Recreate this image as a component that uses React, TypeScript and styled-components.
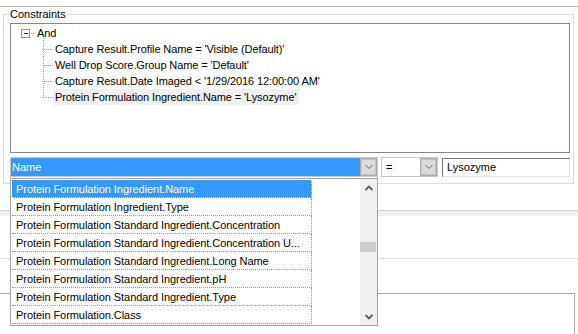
import React from 'react';
import styled, { createGlobalStyle, css } from 'styled-components';

const GlobalStyle = createGlobalStyle`
  html, body {
    margin: 0;
    padding: 0;
    background: #fff;
  }
  body {
    font-family: 'Liberation Sans', Arial, sans-serif;
    font-size: 11px;
    color: #000;
  }
`;

const Page = styled.div`
  position: relative;
  width: 578px;
  height: 334px;
  overflow: hidden;
  background: #fff;
  display: flex;
  flex-direction: column;
`;

const Rule = styled.div<{ $top: number; $color?: string }>`
  flex: none;
  height: 1px;
  margin-top: ${({ $top }) => $top}px;
  background: ${({ $color }) => $color ?? '#dcdcdc'};
`;

const Band = styled.div`
  flex: none;
  height: 5px;
  background: #f0f0f0;
`;

const LowerPanel = styled.div`
  flex: 1;
  width: 575px;
  margin-top: 34px;
  box-sizing: border-box;
  border-top: 1px solid #a8a8a8;
  border-right: 1px solid #a8a8a8;
`;

const GroupBox = styled.div`
  position: relative;
  flex: none;
  width: 571px;
  height: 170px;
  margin: 7px 0 0 3px;
  box-sizing: border-box;
  border: 1px solid #dcdcdc;
  padding: 8px 0 0 6px;
  display: flex;
  flex-direction: column;
  gap: 4px;
`;

const Legend = styled.span`
  position: absolute;
  top: -7px;
  left: 5px;
  padding: 0 1px;
  background: #fff;
  line-height: 13px;
`;

const TreeBox = styled.div`
  width: 560px;
  height: 130px;
  box-sizing: border-box;
  border: 1px solid #828790;
  padding: 1px 0 0 6px;
  letter-spacing: -0.1px;
`;

const TreeRow = styled.div<{ $depth: number }>`
  display: flex;
  align-items: center;
  height: 16px;
  padding-left: ${({ $depth }) => $depth * 18}px;
`;

const Glyph = styled.svg`
  flex: none;
  display: block;
  width: 18px;
  height: 16px;
  overflow: visible;
`;

const NodeLabel = styled.span<{ $selected?: boolean }>`
  height: 16px;
  line-height: 16px;
  padding: 0 3px 0 2px;
  white-space: nowrap;
  background: ${({ $selected }) => ($selected ? '#f0f0f0' : 'transparent')};
`;

const EditorRow = styled.div`
  display: flex;
  align-items: flex-start;
  width: 560px;
`;

const Combo = styled.div<{ $width: number; $gap?: number }>`
  flex: none;
  display: flex;
  width: ${({ $width }) => $width}px;
  height: 20px;
  margin-left: ${({ $gap }) => $gap ?? 0}px;
  box-sizing: border-box;
  border: 1px solid #c8c8c8;
  background: #fff;
`;

const ComboField = styled.div<{ $active?: boolean; $pad: number }>`
  flex: 1;
  display: flex;
  align-items: center;
  padding-left: ${({ $pad }) => $pad}px;
  background: ${({ $active }) => ($active ? '#3399ff' : '#fff')};
  color: ${({ $active }) => ($active ? '#fff' : '#000')};
`;

const ComboButton = styled.div`
  flex: none;
  width: 17px;
  box-sizing: border-box;
  border: 1px solid #acacac;
  box-shadow: inset 0 0 0 1px #c6c6c6;
  background: #dadada;
  display: flex;
  align-items: center;
  justify-content: center;
`;

const TextBox = styled.div`
  flex: none;
  width: 128px;
  height: 19px;
  margin: 1px 0 0 4px;
  box-sizing: border-box;
  border-top: 1px solid #747474;
  border-left: 1px solid #747474;
  border-right: 1px solid #e3e3e3;
  border-bottom: 1px solid #e3e3e3;
  padding-left: 4px;
  line-height: 17px;
`;

const DropList = styled.div`
  position: absolute;
  left: 10px;
  top: 178px;
  width: 368px;
  height: 148px;
  box-sizing: border-box;
  border: 1px solid #a6a6a6;
  background: #fff;
  display: flex;
  justify-content: space-between;
`;

const Items = styled.div`
  padding: 1px 0 0 1px;
  letter-spacing: -0.06px;
`;

const ListItem = styled.div<{ $selected?: boolean }>`
  width: 300px;
  height: 18px;
  box-sizing: border-box;
  border-right: 1px dotted #9a9a9a;
  border-bottom: 1px dotted #9a9a9a;
  padding: 1px 0 0 4px;
  line-height: 16px;
  white-space: nowrap;
  overflow: hidden;
  ${({ $selected }) =>
    $selected &&
    css`
      background: #3399ff;
      color: #fff;
      border-color: #d5e9ff;
    `}
`;

const ScrollBar = styled.div`
  flex: none;
  width: 17px;
  background: #f0f0f0;
  display: flex;
  flex-direction: column;
`;

const ScrollArrow = styled.div`
  flex: none;
  height: 17px;
  display: flex;
  align-items: center;
  justify-content: center;
`;

const Track = styled.div`
  flex: 1;
`;

const Thumb = styled.div<{ $offset: number }>`
  width: 16px;
  height: 10px;
  margin-top: ${({ $offset }) => $offset}px;
  background: #cdcdcd;
`;

const dots = { stroke: '#a0a0a0', strokeDasharray: '1 1', shapeRendering: 'crispEdges' as const };

const RootGlyph = () => (
  <Glyph viewBox="0 0 18 16">
    <rect x="4.5" y="4.5" width="8" height="8" fill="#fff" stroke="#8f8f8f" shapeRendering="crispEdges" />
    <line x1="6.5" y1="8.5" x2="11" y2="8.5" stroke="#2b2b2b" shapeRendering="crispEdges" />
    <line x1="14" y1="8.5" x2="18" y2="8.5" {...dots} />
  </Glyph>
);

const ChildGlyph = ({ first, last }: { first?: boolean; last?: boolean }) => (
  <Glyph viewBox="0 0 18 16">
    <line x1="8.5" y1={first ? -3 : 0} x2="8.5" y2={last ? 9 : 16} {...dots} />
    <line x1="9" y1="8.5" x2="18" y2="8.5" {...dots} />
  </Glyph>
);

const Chevron = ({ dir, bold }: { dir: 'up' | 'down'; bold?: boolean }) => (
  <svg width="8" height="6" viewBox="0 0 8 6">
    <polyline
      points={dir === 'down' ? '0.5,1 4,4.5 7.5,1' : '0.5,5 4,1.5 7.5,5'}
      fill="none"
      stroke={bold ? '#5a5a5a' : '#606060'}
      strokeWidth={bold ? 1.8 : 1}
    />
  </svg>
);

const conditions = [
  "Capture Result.Profile Name = 'Visible (Default)'",
  "Well Drop Score.Group Name = 'Default'",
  "Capture Result.Date Imaged < '1/29/2016 12:00:00 AM'",
  "Protein Formulation Ingredient.Name = 'Lysozyme'",
];

const fields = [
  'Protein Formulation Ingredient.Name',
  'Protein Formulation Ingredient.Type',
  'Protein Formulation Standard Ingredient.Concentration',
  'Protein Formulation Standard Ingredient.Concentration U...',
  'Protein Formulation Standard Ingredient.Long Name',
  'Protein Formulation Standard Ingredient.pH',
  'Protein Formulation Standard Ingredient.Type',
  'Protein Formulation.Class',
];

export default function App() {
  return (
    <>
      <GlobalStyle />
      <Page>
        <Rule $top={6} $color="#bdbdbd" />
        <GroupBox>
          <Legend>Constraints</Legend>
          <TreeBox>
            <TreeRow $depth={0}>
              <RootGlyph />
              <NodeLabel>And</NodeLabel>
            </TreeRow>
            {conditions.map((c, i) => (
              <TreeRow key={c} $depth={1}>
                <ChildGlyph first={i === 0} last={i === conditions.length - 1} />
                <NodeLabel $selected={i === conditions.length - 1}>{c}</NodeLabel>
              </TreeRow>
            ))}
          </TreeBox>
          <EditorRow>
            <Combo $width={368}>
              <ComboField $active $pad={1}>Name</ComboField>
              <ComboButton>
                <Chevron dir="down" />
              </ComboButton>
            </Combo>
            <Combo $width={57} $gap={3}>
              <ComboField $pad={4}>=</ComboField>
              <ComboButton>
                <Chevron dir="down" />
              </ComboButton>
            </Combo>
            <TextBox>Lysozyme</TextBox>
          </EditorRow>
        </GroupBox>
        <Rule $top={26} $color="#d4d4d4" />
        <Band />
        <Rule $top={42} />
        <LowerPanel />

        <DropList>
          <Items>
            {fields.map((f, i) => (
              <ListItem key={f} $selected={i === 0}>
                {f}
              </ListItem>
            ))}
          </Items>
          <ScrollBar>
            <ScrollArrow>
              <Chevron dir="up" bold />
            </ScrollArrow>
            <Track>
              <Thumb $offset={46} />
            </Track>
            <ScrollArrow>
              <Chevron dir="down" bold />
            </ScrollArrow>
          </ScrollBar>
        </DropList>
      </Page>
    </>
  );
}
